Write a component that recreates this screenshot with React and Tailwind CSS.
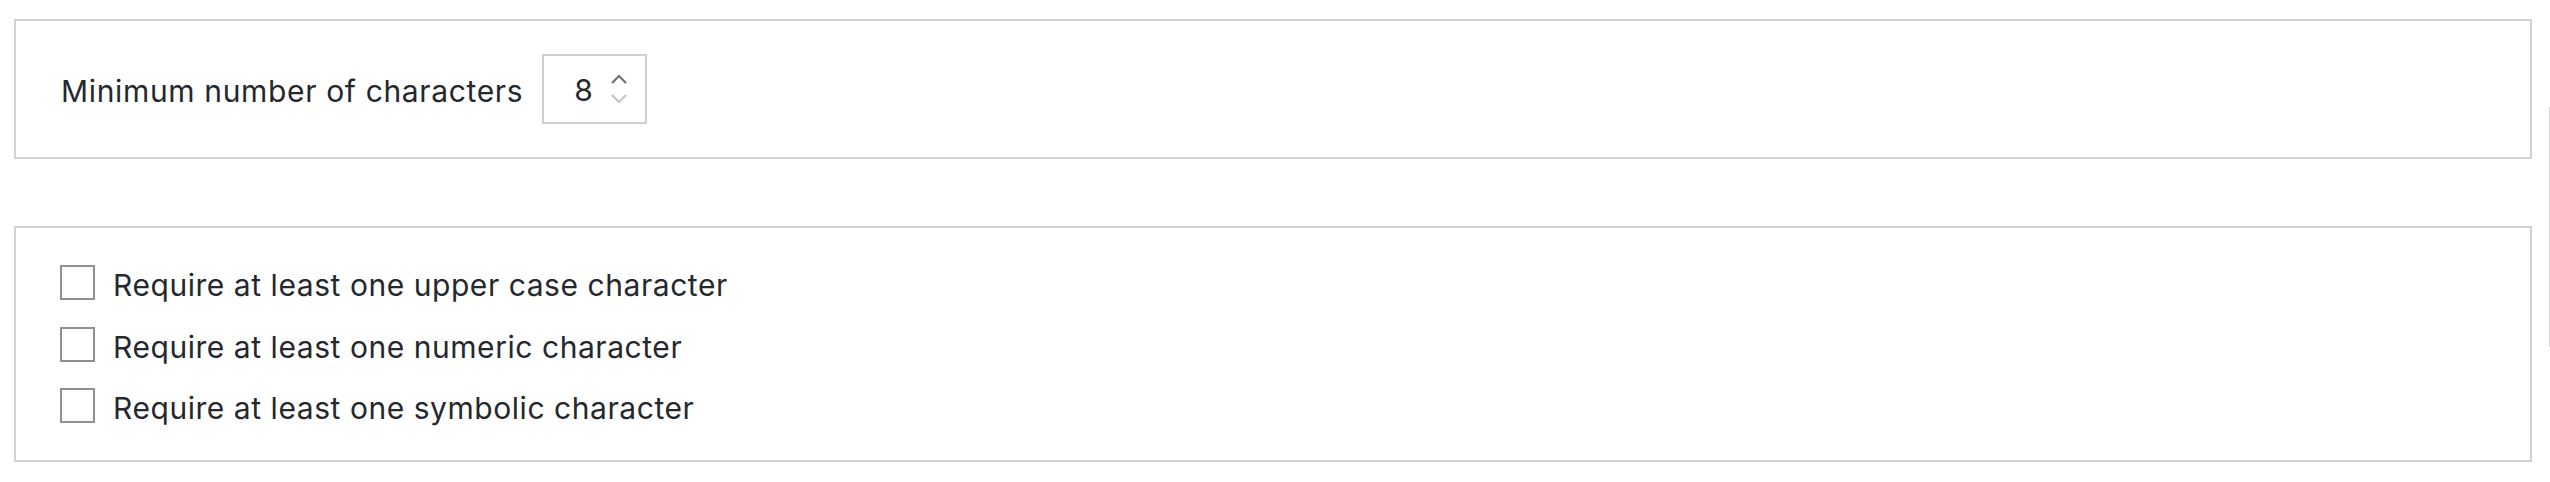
function Checkbox() {
  return <span className="block w-[35px] h-[35px] border-2 border-[#8f8f94] bg-white shrink-0" />;
}

function Row({ label }) {
  return (
    <label className="flex items-center h-[35px]">
      <Checkbox />
      <span className="ml-[18px] text-[30px] tracking-[0.55px] text-[#25282e] leading-none pt-[5px]">{label}</span>
    </label>
  );
}

export default function App() {
  return (
    <div
      className="relative w-[2550px] h-[482px] bg-white pt-[19px] pl-[14px] pr-[18px]"
      style={{ fontFamily: "Inter, 'Open Sans', sans-serif" }}
    >
      <div className="h-[140px] border-2 border-[#d1d1d6] flex items-center pl-[45px]">
        <span className="text-[30px] tracking-[0.65px] text-[#25282e] leading-none pt-[3px]">Minimum number of characters</span>
        <div className="ml-[19px] w-[105px] h-[70px] border-2 border-[#cfcfd3] flex items-center pl-[30px]">
          <span className="text-[30px] text-[#25282e] leading-none pt-[2px]">8</span>
          <svg className="ml-[17px]" width="18" height="32" viewBox="0 0 18 32" fill="none">
            <path d="M2 10 L9 3 L16 10" stroke="#707075" strokeWidth="2.2" />
            <path d="M2 22 L9 29 L16 22" stroke="#c4c4c8" strokeWidth="2.2" />
          </svg>
        </div>
      </div>
      <div className="mt-[67px] h-[236px] border-2 border-[#d1d1d6] pl-[44px] pt-[37px] flex flex-col gap-[26.5px]">
        <Row label="Require at least one upper case character" />
        <Row label="Require at least one numeric character" />
        <Row label="Require at least one symbolic character" />
      </div>
      <div className="absolute left-[2549px] top-[107px] w-px h-[240px] bg-[#d4d4d8]" />
    </div>
  );
}
